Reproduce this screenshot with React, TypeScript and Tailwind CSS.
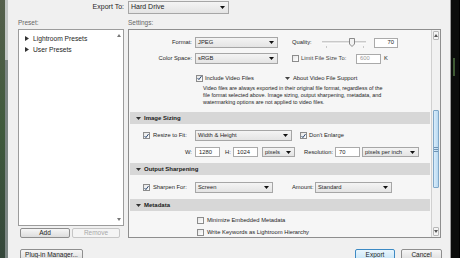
const font = "font-['Liberation_Sans','Arial',sans-serif]";

function DownArrow({ color = '#111' }: { color?: string }) {
  return (
    <svg width="5" height="3" viewBox="0 0 5 3" className="shrink-0">
      <path d="M0 0h5L2.5 3z" fill={color} />
    </svg>
  );
}

function Select({ label, className }: { label: string; className: string }) {
  return (
    <div
      className={`flex shrink-0 items-center justify-between border border-[#a6a6a6] bg-gradient-to-b from-[#f4f4f4] to-[#e4e4e4] pl-[2px] pr-[3px] ${className}`}
    >
      <span className="whitespace-nowrap">{label}</span>
      <DownArrow />
    </div>
  );
}

function Input({ value, className }: { value: string; className: string }) {
  return (
    <div
      className={`flex h-[10px] shrink-0 items-center border border-[#aaaaaa] bg-white px-[3px] ${className}`}
    >
      {value}
    </div>
  );
}

function Check({ on }: { on?: boolean }) {
  return (
    <span className="flex h-[7px] w-[7px] shrink-0 items-center justify-center border border-[#8c8c8c] bg-gradient-to-br from-[#e6e6e6] to-white">
      {on && (
        <svg width="6" height="6" viewBox="0 0 6 6">
          <path d="M0.7 3.1 2.3 4.9 5.4 0.7" stroke="#27456c" strokeWidth="1.2" fill="none" />
        </svg>
      )}
    </span>
  );
}

function Band({ title, className }: { title: string; className: string }) {
  return (
    <div className={`mx-[1px] flex h-[12px] shrink-0 items-center bg-[#d7d7d7] pl-[6px] ${className}`}>
      <DownArrow color="#333" />
      <span className="ml-[3px] text-[6px] font-bold text-[#1a1a1a]">{title}</span>
    </div>
  );
}

function Btn({ label, className }: { label: string; className: string }) {
  return (
    <div
      className={`flex shrink-0 items-center justify-center rounded-[2px] border border-[#8e8e8e] bg-gradient-to-b from-[#f6f6f6] to-[#dddddd] text-[6.5px] text-[#222] ${className}`}
    >
      {label}
    </div>
  );
}

function ScrollBtn({ up }: { up?: boolean }) {
  return (
    <div className="mx-[1px] flex h-[9px] shrink-0 items-center justify-center rounded-[1px] border border-[#b8b8b8] bg-[#f4f4f4]">
      <svg width="4" height="3" viewBox="0 0 4 3">
        <path d={up ? 'M0 3h4L2 0z' : 'M0 0h4L2 3z'} fill="#555" />
      </svg>
    </div>
  );
}

function Slider() {
  return (
    <svg width="46" height="11" viewBox="0 0 46 11" className="shrink-0">
      <line x1="0" y1="5" x2="44" y2="5" stroke="#9c9c9c" strokeWidth="1" />
      <line x1="0" y1="6" x2="44" y2="6" stroke="#ffffff" strokeWidth="1" />
      <path d="M27.5 1.5h5v5.5l-2.5 2.5-2.5-2.5z" fill="#f2f2f2" stroke="#6f6f6f" strokeWidth="0.8" />
      <rect x="4" y="9.5" width="1" height="1" fill="#999" />
      <rect x="41" y="9.5" width="1" height="1" fill="#999" />
    </svg>
  );
}

export default function App() {
  return (
    <div className={`flex h-[258px] w-[460px] overflow-hidden bg-black ${font}`}>
      {/* desktop behind the dialog, left */}
      <div className="w-[5px] bg-gradient-to-b from-[#55604c] via-[#3f5a3c] to-[#34463a]" />
      <div className="flex w-[3px] flex-col">
        <div className="h-[60px] bg-[#c3c7c6]" />
        <div className="flex-1 bg-[#7c8684]" />
      </div>

      {/* dialog */}
      <div className="flex w-[443px] flex-col border-r border-[#9a9a9a] bg-[#f0f0f0] pl-[10px] text-[#1e1e1e]">
        <div className="mt-[1px] flex h-[13px] items-center">
          <span className="w-[106px] text-right text-[7px]">Export To:</span>
          <Select label="Hard Drive" className="ml-[4px] h-[13px] w-[101px] text-[7px]" />
        </div>

        <div className="flex">
          {/* presets */}
          <div className="flex w-[106px] flex-col">
            <div className="h-[15px] pt-[5px] text-[6.5px] leading-[7px] text-[#666]">Preset:</div>
            <div className="flex h-[197px] border border-[#9c9c9c] bg-white">
              <div className="flex-1 pt-[3px] pl-[6px] text-[6.7px] leading-[11px]">
                <div className="flex items-center">
                  <svg width="4" height="5" viewBox="0 0 4 5"><path d="M0 0l4 2.5L0 5z" fill="#333" /></svg>
                  <span className="ml-[4px]">Lightroom Presets</span>
                </div>
                <div className="flex items-center">
                  <svg width="4" height="5" viewBox="0 0 4 5"><path d="M0 0l4 2.5L0 5z" fill="#333" /></svg>
                  <span className="ml-[4px]">User Presets</span>
                </div>
              </div>
              <div className="flex w-[9px] flex-col items-center justify-between py-[4px]">
                <svg width="4" height="3" viewBox="0 0 4 3"><path d="M0 3h4L2 0z" fill="#777" /></svg>
                <svg width="4" height="3" viewBox="0 0 4 3"><path d="M0 0h4L2 3z" fill="#777" /></svg>
              </div>
            </div>
            <div className="mt-[2px] flex h-[10px]">
              <Btn label="Add" className="ml-[2px] w-[50px]" />
              <div className="ml-[2px] flex w-[48px] items-center justify-center rounded-[2px] border border-[#c6c6c6] bg-[#f4f4f4] text-[6.5px] text-[#a8a8a8]">
                Remove
              </div>
            </div>
          </div>

          {/* settings */}
          <div className="ml-[4px] flex w-[313px] flex-col">
            <div className="h-[15px] pt-[5px] text-[6.5px] leading-[7px] text-[#666]">Settings:</div>
            <div className="flex h-[209px] border border-[#8e8e8e] bg-[#f6f6f6] text-[5.8px]">
              <div className="flex flex-1 flex-col overflow-hidden">
                <div className="mt-[7px] flex h-[11px] items-center">
                  <span className="w-[63px] text-right">Format:</span>
                  <Select label="JPEG" className="ml-[3px] h-[11px] w-[83px]" />
                  <span className="ml-[14px] w-[30px]">Quality:</span>
                  <Slider />
                  <Input value="70" className="ml-[6px] w-[24px] justify-end" />
                </div>
                <div className="mt-[5px] flex h-[11px] items-center">
                  <span className="w-[63px] text-right">Color Space:</span>
                  <Select label="sRGB" className="ml-[3px] h-[11px] w-[83px]" />
                  <span className="ml-[14px]"><Check /></span>
                  <span className="ml-[2px] w-[55px] whitespace-nowrap text-[#444]">Limit File Size To:</span>
                  <Input value="600" className="w-[25px] text-[#999]" />
                  <span className="ml-[3px]">K</span>
                </div>
                <div className="mt-[10px] flex h-[8px] items-center">
                  <span className="ml-[67px]"><Check on /></span>
                  <span className="ml-[2px] w-[80px] whitespace-nowrap">Include Video Files</span>
                  <DownArrow color="#444" />
                  <span className="ml-[3px] whitespace-nowrap">About Video File Support</span>
                </div>
                <p className="mt-[3px] ml-[74px] whitespace-nowrap text-[5.4px] leading-[7px]">
                  Video files are always exported in their original file format, regardless of the
                  <br />
                  file format selected above. Image sizing, output sharpening, metadata, and
                  <br />
                  watermarking options are not applied to video files.
                </p>

                <Band title="Image Sizing" className="mt-[6px]" />
                <div className="mt-[6px] flex h-[11px] items-center">
                  <span className="ml-[14px]"><Check on /></span>
                  <span className="ml-[3px] w-[42px] whitespace-nowrap">Resize to Fit:</span>
                  <Select label="Width & Height" className="h-[11px] w-[97px]" />
                  <span className="ml-[8px]"><Check on /></span>
                  <span className="ml-[2px] whitespace-nowrap">Don't Enlarge</span>
                </div>
                <div className="mt-[6px] flex h-[10px] items-center">
                  <span className="ml-[56px] w-[10px]">W:</span>
                  <Input value="1280" className="w-[25px]" />
                  <span className="ml-[5px] w-[8px]">H:</span>
                  <Input value="1024" className="w-[25px]" />
                  <Select label="pixels" className="ml-[4px] h-[10px] w-[33px]" />
                  <span className="ml-[9px] w-[31px]">Resolution:</span>
                  <Input value="70" className="w-[25px]" />
                  <Select label="pixels per inch" className="ml-[2px] h-[10px] w-[57px]" />
                </div>

                <Band title="Output Sharpening" className="mt-[6px]" />
                <div className="mt-[7px] flex h-[11px] items-center">
                  <span className="ml-[14px]"><Check on /></span>
                  <span className="ml-[3px] w-[42px] whitespace-nowrap">Sharpen For:</span>
                  <Select label="Screen" className="h-[11px] w-[78px]" />
                  <span className="ml-[19px] w-[23px]">Amount:</span>
                  <Select label="Standard" className="h-[11px] w-[77px]" />
                </div>

                <Band title="Metadata" className="mt-[6px]" />
                <div className="mt-[5px] flex h-[8px] items-center">
                  <span className="ml-[68px]"><Check /></span>
                  <span className="ml-[3px] whitespace-nowrap">Minimize Embedded Metadata</span>
                </div>
                <div className="mt-[4px] flex h-[8px] items-center">
                  <span className="ml-[68px]"><Check /></span>
                  <span className="ml-[3px] whitespace-nowrap">Write Keywords as Lightroom Hierarchy</span>
                </div>
              </div>

              {/* scrollbar */}
              <div className="flex w-[9px] flex-col border-l border-[#d0d0d0] bg-[#f1f1f1] py-[1px]">
                <ScrollBtn up />
                <div className="h-[70px]" />
                <div className="mx-[1px] flex h-[78px] flex-col items-center justify-center gap-[1px] rounded-[1px] border border-[#7fa7c8] bg-gradient-to-r from-[#d9ecfa] to-[#b9d9f1]">
                  <div className="h-px w-[4px] bg-[#6f93b3]" />
                  <div className="h-px w-[4px] bg-[#6f93b3]" />
                  <div className="h-px w-[4px] bg-[#6f93b3]" />
                </div>
                <div className="flex-1" />
                <ScrollBtn />
              </div>
            </div>
          </div>
        </div>

        <div className="mt-[11px] flex h-[12px]">
          <Btn label="Plug-in Manager..." className="ml-[2px] w-[63px]" />
          <div className="ml-[272px] flex w-[40px] items-center justify-center rounded-[2px] border border-[#3c8ac4] bg-gradient-to-b from-[#eaf6fd] to-[#c4e3f6] text-[6.5px]">
            Export
          </div>
          <Btn label="Cancel" className="ml-[6px] w-[41px]" />
        </div>
      </div>

      {/* desktop behind the dialog, right */}
      <div className="flex w-[8px] flex-col bg-[#0b0c0b]">
        <div className="ml-[2px] mt-[58px] h-[18px] w-[2px] bg-[#3f5a34]" />
      </div>
    </div>
  );
}
